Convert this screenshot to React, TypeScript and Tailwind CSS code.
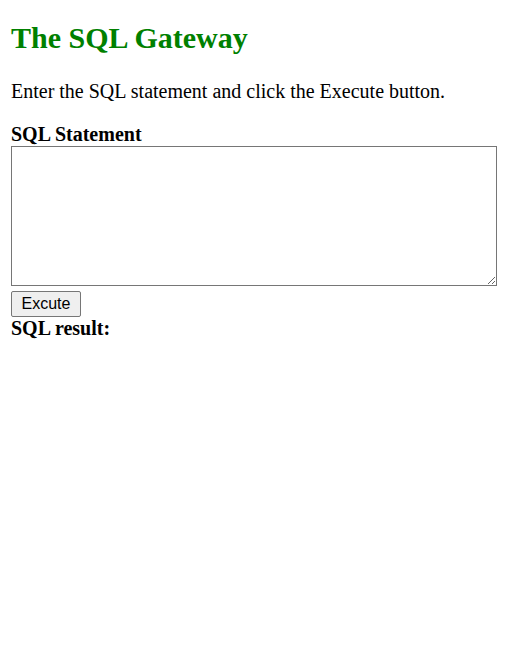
export default function App() {
  return (
    <div className="min-h-[648px] bg-white px-[11px] pt-[21px] text-black" style={{ fontFamily: '"Liberation Serif", "Times New Roman", serif' }}>
      <h1 className="text-[30px] font-bold leading-[34px] text-[#008000]">The SQL Gateway</h1>
      <p className="mt-[25px] text-[20px] leading-[23px]">Enter the SQL statement and click the Execute button.</p>
      <form className="mt-[20px]" onSubmit={(e) => e.preventDefault()}>
        <label className="block text-[20px] font-bold leading-[23px]">SQL Statement</label>
        <textarea className="block h-[140px] w-[486px] resize border border-[#767676] bg-white" />
        <button type="submit" className="mt-[5px] block h-[26px] w-[70px] rounded-[2px] border border-[#767676] bg-[#efefef] text-[16px] leading-[20px] text-black" style={{ fontFamily: '"Liberation Sans", Arial, sans-serif' }}>
          Excute
        </button>
        <div className="text-[20px] font-bold leading-[22px]">SQL result:</div>
      </form>
    </div>
  );
}
